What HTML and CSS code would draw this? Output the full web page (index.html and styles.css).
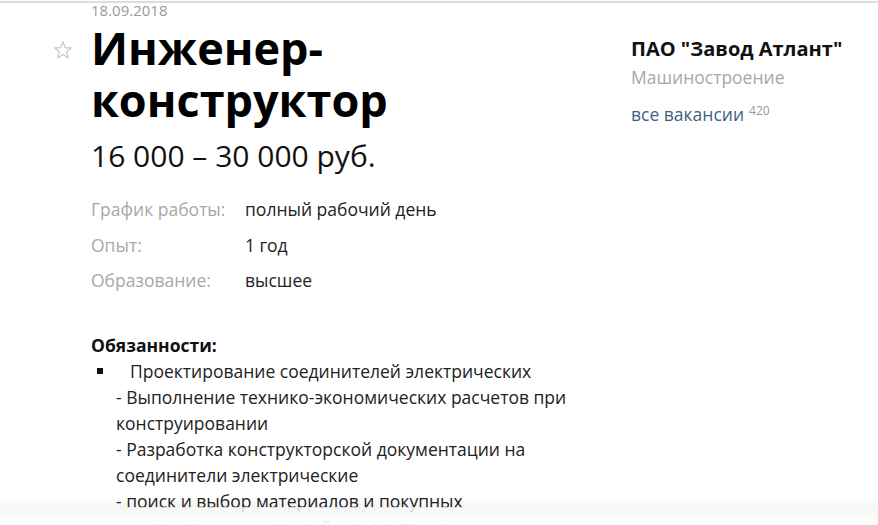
FILE: index.html
```html
<!DOCTYPE html>
<html lang="ru">
<head>
<meta charset="utf-8">
<title>Инженер-конструктор</title>
<link rel="stylesheet" href="styles.css">
</head>
<body>
<div class="page">
  <div class="gutter">
    <span class="star-slot">
      <svg class="star" viewBox="0 0 20 20" width="20" height="20" aria-hidden="true">
        <path d="M10 1.8 L12.2 7.6 L18.4 7.9 L13.6 11.8 L15.2 17.9 L10 14.5 L4.8 17.9 L6.4 11.8 L1.6 7.9 L7.8 7.6 Z" fill="none" stroke="#c4c4c4" stroke-width="1.2" stroke-linejoin="round"/>
      </svg>
    </span>
  </div>
  <main class="main">
    <div class="date">18.09.2018</div>
    <h1 class="title">Инженер-<br>конструктор</h1>
    <div class="salary">16 000 – 30 000 руб.</div>
    <dl class="facts">
      <div class="fact"><dt>График работы:</dt><dd>полный рабочий день</dd></div>
      <div class="fact"><dt>Опыт:</dt><dd>1 год</dd></div>
      <div class="fact"><dt>Образование:</dt><dd>высшее</dd></div>
    </dl>
    <div class="desc">
      <div class="desc-head">Обязанности:</div>
      <ul class="duties">
        <li>Проектирование соединителей электрических</li>
      </ul>
      <p class="duty-text">- Выполнение технико-экономических расчетов при конструировании<br>- Разработка конструкторской документации на соединители электрические<br>- поиск и выбор материалов и покупных комплектующих изделий, удовлетворяющих</p>
    </div>
  </main>
  <aside class="side">
    <div class="company">ПАО "Завод Атлант"</div>
    <div class="industry">Машиностроение</div>
    <a class="all" href="#">все вакансии</a><sup class="count">420</sup>
  </aside>
</div>
<div class="fade"></div>
</body>
</html>
```

FILE: styles.css
```css
html, body {
  margin: 0;
  padding: 0;
  background: #fff;
}
body {
  font-family: "Open Sans", "Noto Sans", sans-serif;
  color: #111;
  overflow: hidden;
}
.page {
  margin-top: 1px;
  border-top: 2px solid #dcdcdc;
  display: grid;
  grid-template-columns: 91px 540px 1fr;
}
.gutter {
  display: flex;
  justify-content: flex-end;
  padding-top: 37px;
  padding-right: 18px;
}
.star-slot {
  display: block;
  width: 20px;
  height: 20px;
}
.star {
  display: block;
}
.date {
  font-size: 15px;
  line-height: 16px;
  margin-top: -1px;
  color: #9a9a9a;
}
.title {
  margin: 4px 0 0;
  font-size: 45px;
  line-height: 52px;
  font-weight: 700;
  color: #000;
}
.salary {
  margin-top: 12px;
  font-size: 30px;
  line-height: 36px;
  color: #111;
}
.facts {
  margin: 18px 0 0;
}
.fact {
  display: flex;
  font-size: 17.5px;
  line-height: 35.5px;
}
.fact dt {
  width: 154px;
  color: #a8a8a8;
}
.fact dd {
  margin: 0;
  color: #222;
}
.desc {
  margin-top: 33.5px;
  font-size: 17.5px;
  line-height: 26px;
  color: #222;
}
.desc-head {
  font-weight: 700;
  color: #111;
}
.duties {
  margin: 0;
  padding: 0;
  list-style: none;
}
.duties li {
  display: flex;
  align-items: center;
}
.duties li::before {
  content: "";
  width: 6px;
  height: 6px;
  background: #111;
  margin: 0 27px 0 6px;
  flex: none;
}
.duty-text {
  margin: 0;
  padding-left: 25px;
  width: 462px;
}
.side {
  padding-top: 34px;
}
.company {
  font-size: 20px;
  line-height: 24px;
  font-weight: 700;
  color: #111;
}
.industry {
  margin-top: 4px;
  font-size: 17.5px;
  line-height: 24px;
  color: #a8a8a8;
}
.all {
  display: inline-block;
  margin-top: 13px;
  font-size: 17.5px;
  line-height: 24px;
  color: #3f5f86;
  text-decoration: none;
}
.count {
  margin-left: 5px;
  font-size: 12px;
  color: #999;
}
.fade {
  position: fixed;
  left: 0;
  right: 0;
  bottom: 0;
  height: 18px;
  background: linear-gradient(to bottom, rgba(244,244,244,0.82), rgba(255,255,255,0.94));
  box-shadow: 0 -4px 10px rgba(0,0,0,0.05);
}
```
